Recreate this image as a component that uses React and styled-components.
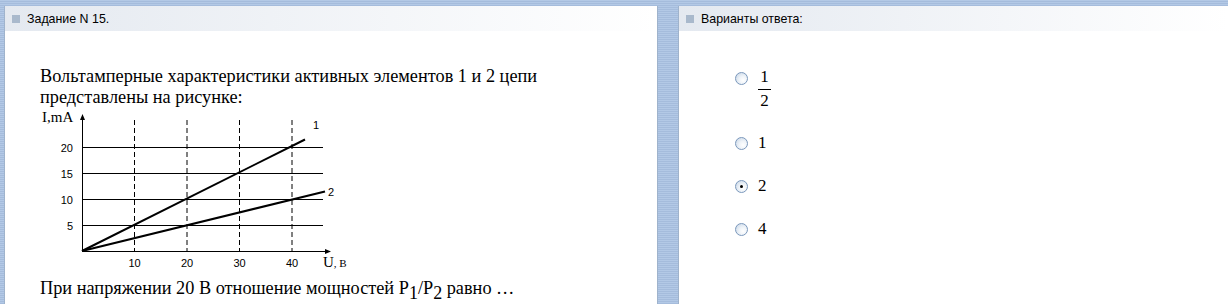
import React from "react";
import styled, { createGlobalStyle } from "styled-components";

const GlobalStyle = createGlobalStyle`
  html, body {
    margin: 0;
    padding: 0;
    height: 100%;
  }
  #root {
    height: 100%;
  }
`;

const options = [
  { id: 1, frac: ["1", "2"] },
  { id: 2, label: "1" },
  { id: 3, label: "2", checked: true },
  { id: 4, label: "4" },
];

// chart geometry: origin at (42,141), 10 V = 52.5px, 5 mA = 26px
const ox = 42;
const oy = 141;
const gridY = [
  { v: 20, y: 37 },
  { v: 15, y: 63 },
  { v: 10, y: 89 },
  { v: 5, y: 115 },
];
const gridX = [
  { v: 10, x: 94.5 },
  { v: 20, x: 147 },
  { v: 30, x: 199.5 },
  { v: 40, x: 252 },
];

function Chart() {
  return (
    <ChartSvg width="320" height="162" viewBox="0 0 320 162">
      {gridX.map((g) => (
        <line
          key={g.v}
          x1={g.x}
          y1="10"
          x2={g.x}
          y2={oy}
          stroke="#000"
          strokeWidth="1"
          strokeDasharray="5 3"
        />
      ))}
      {gridY.map((g) => (
        <line key={g.v} x1={ox} y1={g.y + 0.5} x2="283" y2={g.y + 0.5} stroke="#000" strokeWidth="1" />
      ))}
      {/* axes */}
      <line x1={ox + 0.5} y1="8" x2={ox + 0.5} y2={oy} stroke="#000" strokeWidth="1" />
      <path d="M42.5 4 L40 10 L45 10 Z" fill="#000" />
      <line x1={ox} y1={oy + 0.5} x2="286" y2={oy + 0.5} stroke="#000" strokeWidth="1" />
      <path d="M291 141.5 L285 139 L285 144 Z" fill="#000" />
      {/* characteristics */}
      <line x1={ox} y1={oy} x2="265" y2="29.5" stroke="#000" strokeWidth="2" />
      <line x1={ox} y1={oy} x2="285" y2="81.5" stroke="#000" strokeWidth="2" />
      <AxisText x="273" y="19">1</AxisText>
      <AxisText x="288" y="86">2</AxisText>
      {gridY.map((g) => (
        <AxisText key={g.v} x="33" y={g.y + 4.5} textAnchor="end">
          {g.v}
        </AxisText>
      ))}
      {gridX.map((g) => (
        <AxisText key={g.v} x={g.x} y="157" textAnchor="middle">
          {g.v}
        </AxisText>
      ))}
      <SerifText x="2" y="12">I,mA</SerifText>
      <SerifText x="283" y="157">
        U<tspan fontSize="11">, В</tspan>
      </SerifText>
    </ChartSvg>
  );
}

export default function App() {
  return (
    <>
      <GlobalStyle />
      <Page>
        <Panel $width="652px">
          <PanelHead>
            <Marker />
            Задание N 15.
          </PanelHead>
          <Question>
            <Text>
              Вольтамперные характеристики активных элементов 1 и 2 цепи
              <br />
              представлены на рисунке:
            </Text>
            <Chart />
            <Text>
              При напряжении 20 В отношение мощностей P<Sub>1</Sub>/P<Sub>2</Sub> равно …
            </Text>
          </Question>
        </Panel>
        <Panel>
          <PanelHead>
            <Marker />
            Варианты ответа:
          </PanelHead>
          <Options>
            {options.map((o) => (
              <Option key={o.id}>
                <Radio $checked={o.checked} />
                {o.frac ? (
                  <Fraction>
                    <span>{o.frac[0]}</span>
                    <Bar />
                    <span>{o.frac[1]}</span>
                  </Fraction>
                ) : (
                  <OptionLabel>{o.label}</OptionLabel>
                )}
              </Option>
            ))}
          </Options>
        </Panel>
      </Page>
    </>
  );
}

const Page = styled.div`
  box-sizing: border-box;
  height: 100%;
  display: flex;
  gap: 22px;
  padding: 6px 0 0 5px;
  background: repeating-linear-gradient(
    to bottom,
    #b3c9e6 0px,
    #b3c9e6 1px,
    #a5bcdc 1px,
    #a5bcdc 2px
  );
  overflow: hidden;
`;

const Panel = styled.div`
  box-sizing: border-box;
  width: ${(p) => p.$width || "auto"};
  flex: ${(p) => (p.$width ? "none" : "1")};
  height: 100%;
  background: #fff;
  box-shadow: 1px 0 0 #9fb3cc, -1px 0 0 #9fb3cc;
`;

const PanelHead = styled.div`
  height: 25px;
  display: flex;
  align-items: center;
  padding-left: 7px;
  background: linear-gradient(to right, #e4e9f0, #ffffff);
  font-family: "Liberation Sans", Arial, sans-serif;
  font-size: 12.4px;
  color: #000;
`;

const Marker = styled.span`
  width: 8px;
  height: 8px;
  margin-right: 7px;
  background: #a9b9cc;
`;

const Question = styled.div`
  padding: 35px 0 0 35px;
`;

const Text = styled.div`
  font-family: "Liberation Serif", "Times New Roman", serif;
  font-size: 18.3px;
  line-height: 21px;
  color: #000;
`;

const Sub = styled.sub`
  font-size: 18px;
  vertical-align: -5px;
  line-height: 0;
`;

const ChartSvg = styled.svg`
  display: block;
  margin: 2px 0 6px 0;
`;

const AxisText = styled.text`
  font-family: "Liberation Sans", Arial, sans-serif;
  font-size: 11px;
  fill: #000;
`;

const SerifText = styled.text`
  font-family: "Liberation Serif", "Times New Roman", serif;
  font-size: 15px;
  fill: #000;
`;

const Options = styled.div`
  display: flex;
  flex-direction: column;
  gap: 23px;
  padding: 37px 0 0 56px;
`;

const Option = styled.div`
  display: flex;
  align-items: flex-start;
  gap: 10px;
  min-height: 20px;
  font-family: "Liberation Serif", "Times New Roman", serif;
  font-size: 17px;
  color: #000;
`;

const Radio = styled.span`
  position: relative;
  box-sizing: border-box;
  flex: none;
  width: 13px;
  height: 13px;
  margin-top: 4px;
  border-radius: 50%;
  border: 1px solid #7b98bc;
  background: radial-gradient(circle at 65% 65%, #ffffff 0%, #eef3f8 40%, #c3d2e4 100%);

  &::after {
    content: "";
    display: ${(p) => (p.$checked ? "block" : "none")};
    position: absolute;
    left: 4px;
    top: 4px;
    width: 3px;
    height: 3px;
    border-radius: 50%;
    background: #000;
  }
`;

const OptionLabel = styled.span`
  line-height: 20px;
`;

const Fraction = styled.span`
  display: inline-flex;
  flex-direction: column;
  align-items: center;
  line-height: 18px;
  margin-left: 0;
`;

const Bar = styled.span`
  width: 13px;
  height: 1px;
  margin: 3px 0 2px;
  background: #000;
`;
